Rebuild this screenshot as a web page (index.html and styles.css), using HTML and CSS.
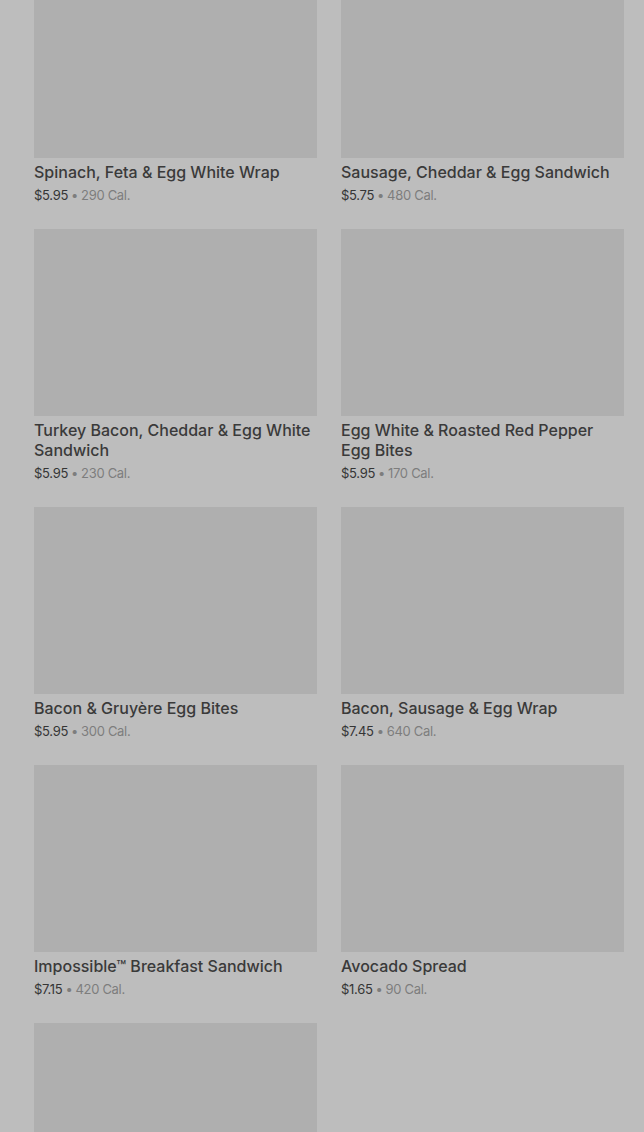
FILE: index.html
```html
<!DOCTYPE html>
<html lang="en">
<head>
    <meta charset="UTF-8">
    <meta name="viewport" content="width=device-width, initial-scale=1.0">
    <title>Breakfast</title>
    <link rel="stylesheet" href="styles.css">
</head>
<body>
    <div class="menu-grid">
        <div class="item">
            <div class="item-photo"></div>
            <div class="item-name">Spinach, Feta &amp; Egg White Wrap</div>
            <div class="item-meta"><span class="price">$5.95</span><span class="dot">•</span>290 Cal.</div>
        </div>
        <div class="item">
            <div class="item-photo"></div>
            <div class="item-name">Sausage, Cheddar &amp; Egg Sandwich</div>
            <div class="item-meta"><span class="price">$5.75</span><span class="dot">•</span>480 Cal.</div>
        </div>
        <div class="item">
            <div class="item-photo"></div>
            <div class="item-name">Turkey Bacon, Cheddar &amp; Egg White Sandwich</div>
            <div class="item-meta"><span class="price">$5.95</span><span class="dot">•</span>230 Cal.</div>
        </div>
        <div class="item">
            <div class="item-photo"></div>
            <div class="item-name">Egg White &amp; Roasted Red Pepper Egg Bites</div>
            <div class="item-meta"><span class="price">$5.95</span><span class="dot">•</span>170 Cal.</div>
        </div>
        <div class="item">
            <div class="item-photo"></div>
            <div class="item-name">Bacon &amp; Gruyère Egg Bites</div>
            <div class="item-meta"><span class="price">$5.95</span><span class="dot">•</span>300 Cal.</div>
        </div>
        <div class="item">
            <div class="item-photo"></div>
            <div class="item-name">Bacon, Sausage &amp; Egg Wrap</div>
            <div class="item-meta"><span class="price">$7.45</span><span class="dot">•</span>640 Cal.</div>
        </div>
        <div class="item">
            <div class="item-photo"></div>
            <div class="item-name">Impossible™ Breakfast Sandwich</div>
            <div class="item-meta"><span class="price">$7.15</span><span class="dot">•</span>420 Cal.</div>
        </div>
        <div class="item">
            <div class="item-photo"></div>
            <div class="item-name">Avocado Spread</div>
            <div class="item-meta"><span class="price">$1.65</span><span class="dot">•</span>90 Cal.</div>
        </div>
        <div class="item">
            <div class="item-photo"></div>
        </div>
    </div>
</body>
</html>
```

FILE: styles.css
```css
html, body {
    margin: 0;
    height: 100%;
    overflow: hidden;
}
body {
    font-family: Inter, "Noto Sans", sans-serif;
    background: #bdbdbd;
}
.menu-grid {
    display: grid;
    grid-template-columns: 283px 283px;
    gap: 24px;
    padding: 0 20px 0 34px;
    margin-top: -29px;
}
.item-photo {
    height: 187px;
    background: #afafaf;
}
.item-name {
    margin-top: 4px;
    font-size: 16px;
    line-height: 20px;
    font-weight: 500;
    color: #3a3a3a;
}
.item-meta {
    height: 20px;
    margin-top: 3px;
    font-size: 13px;
    line-height: 20px;
    letter-spacing: -0.3px;
    color: #7d7d7d;
}
.price {
    color: #353535;
}
.dot {
    margin: 0 3px;
}
```
